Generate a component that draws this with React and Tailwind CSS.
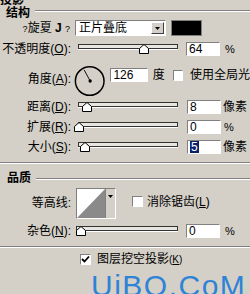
import React from "react";

const font = "font-['Liberation_Sans','Noto_Sans_CJK_SC',sans-serif]";

function Etched({ className = "" }) {
  return <div className={`h-[2px] border-t border-[#808080] bg-white ${className}`} />;
}

function Field({ value, w = "w-[34px]", selected = false, className = "" }) {
  return (
    <div
      className={`flex h-[14px] items-center border-t border-l border-[#808080] border-r border-b border-r-white border-b-white bg-white pl-[2px] text-[12px] leading-[12px] ${w} ${className}`}
    >
      {selected ? (
        <span className="bg-[#0a246a] px-[1px] text-white">{value}</span>
      ) : (
        <span>{value}</span>
      )}
    </div>
  );
}

function Slider({ w = "w-[100px]", thumb = 0, className = "" }) {
  return (
    <div className={`relative h-[12px] ${w} ${className}`}>
      <div className="mt-[1px] h-[5px] border border-[#333] bg-[#e8e6e1] shadow-[0_1px_0_#fff]" />
      <svg
        className="absolute top-[1px]"
        style={{ left: thumb }}
        width="10"
        height="10"
        viewBox="0 0 10 10"
      >
        <polygon points="5,0.5 9.5,4.5 9.5,9.5 0.5,9.5 0.5,4.5" fill="#fff" stroke="#000" strokeWidth="1" />
      </svg>
    </div>
  );
}

function Check({ checked = false, className = "" }) {
  return (
    <div
      className={`flex h-[11px] w-[11px] items-center justify-center border-t border-l border-[#808080] border-r border-b border-r-white border-b-white bg-white ${className}`}
    >
      {checked && (
        <svg width="9" height="9" viewBox="0 0 9 9">
          <path d="M1 4 L3.5 6.5 L8 1.5" fill="none" stroke="#000" strokeWidth="1.8" />
        </svg>
      )}
    </div>
  );
}

function Label({ children, className = "" }) {
  return (
    <div className={`w-[72px] shrink-0 whitespace-nowrap pr-[1px] text-right text-[12px] leading-[12px] ${className}`}>
      {children}
    </div>
  );
}

export default function App() {
  return (
    <div className={`h-[294px] w-[250px] overflow-hidden bg-[#d4d0c8] text-black ${font}`}>
      {/* 投影 (cut off) */}
      <div className="flex h-[6px] items-end overflow-hidden">
        <span className="text-[12px] font-bold leading-[12px]">投影</span>
      </div>

      {/* 结构 */}
      <div className="flex h-[13px] items-center pl-[6px]">
        <span className="text-[12px] font-bold leading-[12px]">结构</span>
        <Etched className="mb-[4px] ml-[5px] flex-1" />
      </div>

      {/* blend mode */}
      <div className="flex h-[18px] items-center">
        <Label className="pr-[2px]">
          <span className="text-[9px]">?</span>
          <span>旋夏</span>
          <span className="font-bold"> J </span>
          <span className="text-[9px]">?</span>
        </Label>
        <div className="ml-[3px] flex h-[16px] w-[91px] items-center border-t border-l border-[#808080] border-r border-b border-r-white border-b-white bg-white">
          <span className="flex-1 pl-[3px] text-[12px] leading-[12px]">正片叠底</span>
          <div className="mr-[1px] flex h-[12px] w-[13px] items-center justify-center border border-t-white border-l-white border-r-[#404040] border-b-[#404040] bg-[#d4d0c8]">
            <svg width="5" height="3" viewBox="0 0 5 3">
              <polygon points="0,0 5,0 2.5,3" fill="#000" />
            </svg>
          </div>
        </div>
        <div className="ml-[5px] h-[16px] w-[31px] border border-[#808080] bg-black" />
      </div>

      {/* opacity */}
      <div className="flex h-[24px] items-center">
        <Label>
          不透明度(<u>O</u>):
        </Label>
        <Slider className="ml-[6px]" thumb={61} />
        <Field value="64" className="ml-[8px]" />
        <span className="ml-[5px] text-[11px]">%</span>
      </div>

      {/* angle */}
      <div className="flex h-[36px] items-start">
        <Label className="mt-[12px]">
          角度(<u>A</u>):
        </Label>
        <svg className="ml-[2px] mt-[3px]" width="34" height="34" viewBox="0 0 34 34">
          <circle cx="17" cy="17" r="15.5" fill="none" stroke="#000" strokeWidth="1.6" />
          <line x1="17.5" y1="17" x2="11" y2="5" stroke="#000" strokeWidth="1" />
          <circle cx="17.5" cy="17" r="1.8" fill="#000" />
        </svg>
        <Field value="126" w="w-[40px]" className="ml-[5px] mt-[7px]" />
        <span className="ml-[5px] mt-[8px] text-[12px] leading-[12px]">度</span>
        <Check className="ml-[8px] mt-[9px]" />
        <span className="ml-[7px] mt-[8px] whitespace-nowrap text-[12px] leading-[12px]">使用全局光</span>
      </div>

      {/* distance */}
      <div className="flex h-[20px] items-center">
        <Label>
          距离(<u>D</u>):
        </Label>
        <Slider className="ml-[6px]" thumb={4} />
        <Field value="8" className="ml-[9px]" />
        <span className="ml-[2px] text-[12px] leading-[12px]">像素</span>
      </div>

      {/* spread */}
      <div className="flex h-[20px] items-center">
        <Label>
          扩展(<u>R</u>):
        </Label>
        <Slider className="ml-[6px]" thumb={-4} />
        <Field value="0" className="ml-[9px]" />
        <span className="ml-[3px] text-[11px]">%</span>
      </div>

      {/* size */}
      <div className="flex h-[20px] items-center">
        <Label>
          大小(<u>S</u>):
        </Label>
        <Slider className="ml-[6px]" thumb={2} />
        <Field value="5" selected className="ml-[9px]" />
        <span className="ml-[2px] text-[12px] leading-[12px]">像素</span>
      </div>

      <div className="h-[5px]" />
      <Etched />
      <div className="h-[7px]" />

      {/* 品质 */}
      <div className="flex h-[14px] items-center pl-[7px]">
        <span className="text-[12px] font-bold leading-[12px]">品质</span>
        <Etched className="ml-[5px] mt-[2px] flex-1" />
      </div>

      {/* contour */}
      <div className="flex h-[36px] items-center">
        <Label>等高线:</Label>
        <div className="ml-[4px] flex h-[31px] w-[40px] border-t border-l border-[#808080] border-r border-b border-r-white border-b-white bg-white">
          <svg width="28" height="29" viewBox="0 0 28 29" className="shrink-0">
            <rect width="28" height="29" fill="#fff" />
            <polygon points="0,29 28,0 28,29" fill="#8a8a8a" />
          </svg>
          <div className="flex flex-1 justify-center border-l border-[#808080] bg-[#d4d0c8] pt-[6px]">
            <svg width="5" height="3" viewBox="0 0 5 3">
              <polygon points="0,0 5,0 2.5,3" fill="#000" />
            </svg>
          </div>
        </div>
        <Check className="ml-[16px] -mt-[3px]" />
        <span className="ml-[4px] -mt-[3px] whitespace-nowrap text-[12px] leading-[12px]">
          消除锯齿(<u>L</u>)
        </span>
      </div>

      {/* noise */}
      <div className="flex h-[20px] items-center">
        <Label>
          杂色(<u>N</u>):
        </Label>
        <Slider w="w-[102px]" className="ml-[4px]" thumb={0} />
        <Field value="0" className="ml-[8px]" />
        <span className="ml-[5px] text-[11px]">%</span>
      </div>

      <div className="h-[5px]" />
      <Etched />

      {/* knockout */}
      <div className="flex h-[22px] items-center pl-[80px]">
        <Check checked />
        <span className="ml-[6px] whitespace-nowrap text-[12px] leading-[12px]">
          图层挖空投影<span className="text-[10px]">(<u>K</u>)</span>
        </span>
      </div>

      {/* watermark */}
      <div className="mt-[1px] pl-[91px] font-['Liberation_Sans',sans-serif] text-[30px] leading-[30px] tracking-[1.5px] text-[#2f83d6]">
        UiBQ.CoM
      </div>
    </div>
  );
}
